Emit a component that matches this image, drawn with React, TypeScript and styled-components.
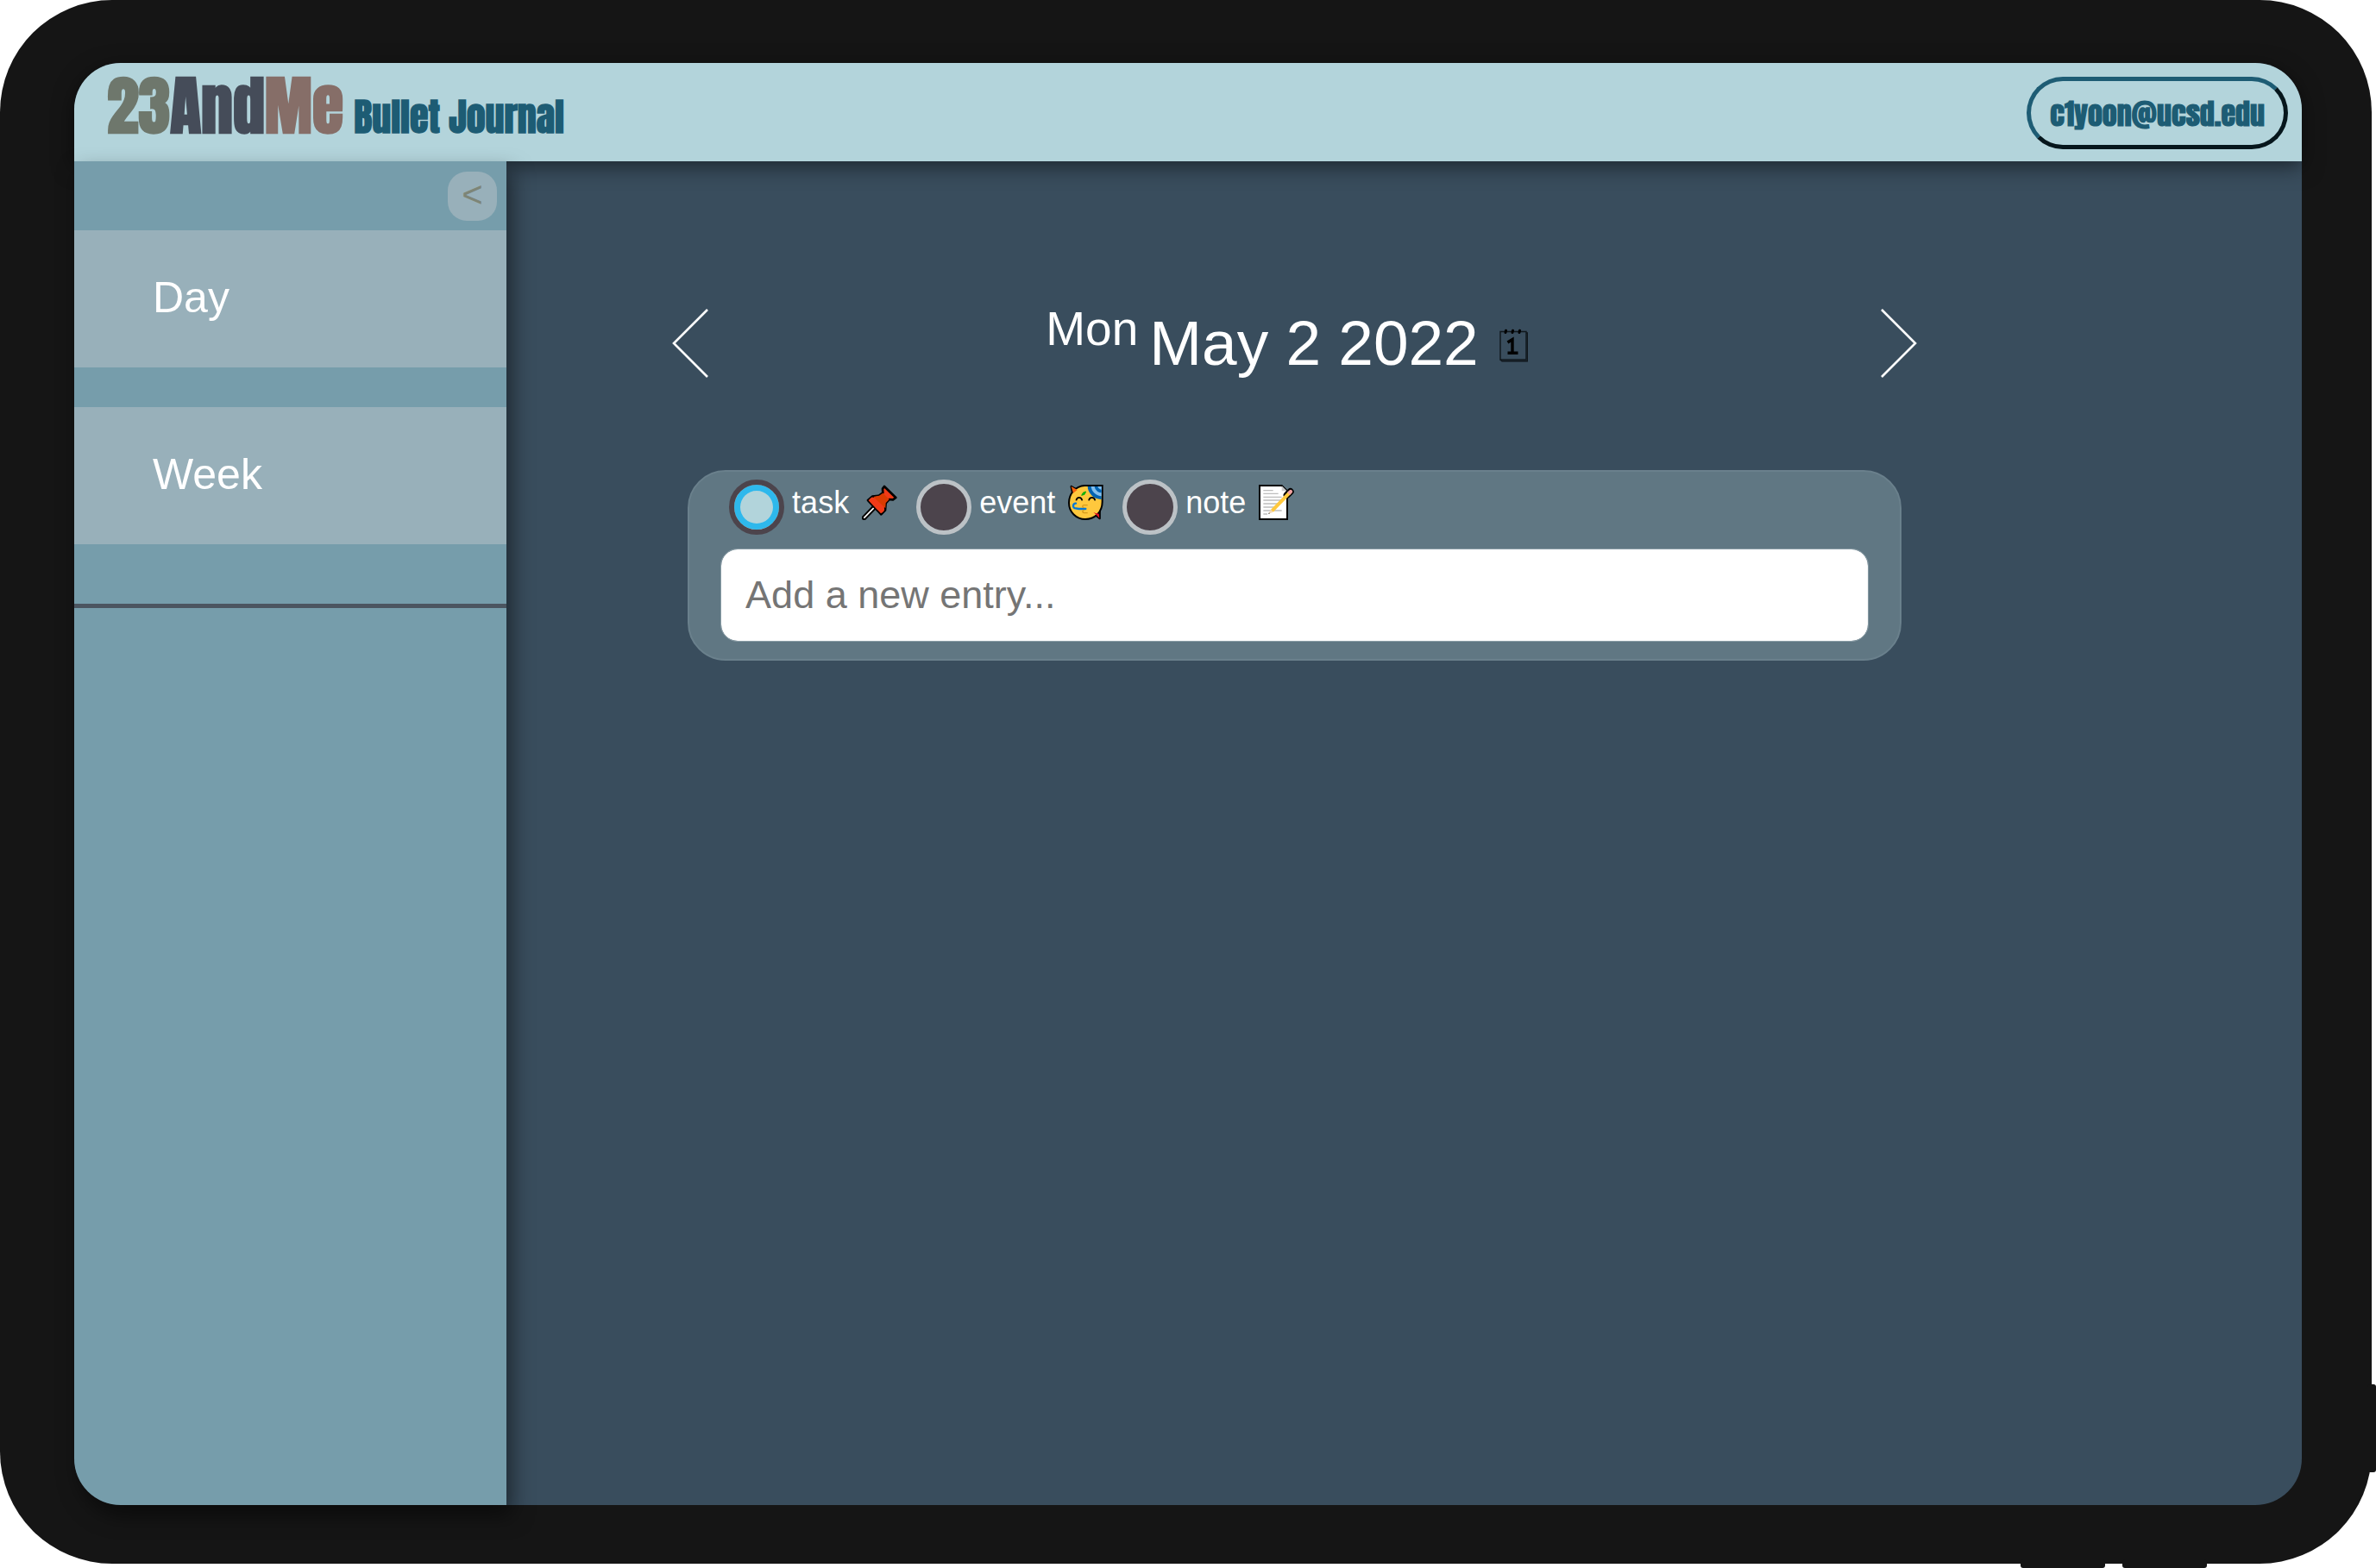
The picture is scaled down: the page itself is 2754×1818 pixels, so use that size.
import React, { useState } from "react";
import styled, { createGlobalStyle } from "styled-components";

const GlobalStyle = createGlobalStyle`
  *, *::before, *::after { box-sizing: border-box; }
  body {
    margin: 0;
    background: #ffffff;
    font-family: "Liberation Sans", Arial, sans-serif;
    color: #ffffff;
  }
  button, input { font: inherit; }
  svg { display: block; }
`;

const displayFont = `Impact, Anton, "Liberation Sans Narrow", "Roboto Condensed", "Liberation Sans", sans-serif`;

const Page = styled.div`
  display: flex;
  min-height: 100vh;
  padding: 0 5px 5px 0;
  overflow: hidden;
`;

const Device = styled.div`
  position: relative;
  display: flex;
  flex: 1;
  padding: 73px 81px 68px 86px;
  border-radius: 130px;
  background: #151515;
`;

const SideKey = styled.span`
  position: absolute;
  right: -5px;
  bottom: 106px;
  width: 10px;
  height: 102px;
  border-radius: 3px;
  background: #151515;
`;

const BottomKeys = styled.span`
  position: absolute;
  right: 191px;
  bottom: -5px;
  display: flex;
  gap: 20px;
`;

const BottomKey = styled.span`
  width: 98px;
  height: 10px;
  border-radius: 3px;
  background: #151515;
`;

const Screen = styled.div`
  display: grid;
  flex: 1;
  grid-template: auto 1fr / 501px 1fr;
  border-radius: 54px;
  background: #394d5d;
`;

const Header = styled.header`
  z-index: 1;
  grid-column: 1 / -1;
  display: flex;
  align-items: center;
  justify-content: space-between;
  height: 114px;
  padding: 2px 16px 0 38px;
  border-radius: 54px 54px 0 0;
  background: #b3d4db;
  box-shadow: 0 6px 24px rgba(0, 0, 0, 0.5);
`;

const Brand = styled.h1`
  margin: 0;
  padding-bottom: 4px;
  font-family: ${displayFont};
  font-size: 74px;
  line-height: 100px;
  font-weight: 700;
  white-space: nowrap;
`;

const BrandPart = styled.span<{ $tone: string }>`
  color: ${(p) => p.$tone};
`;

const BrandSub = styled.span`
  margin-left: 12px;
  color: #1d5c74;
  font-size: 44px;
`;

const Account = styled.button`
  height: 84px;
  padding: 0 22px;
  border: 5px solid;
  border-color: #1d5c74 #06161c #06161c #1d5c74;
  border-radius: 42px;
  background: transparent;
  color: #1d5c74;
  font-family: ${displayFont};
  font-size: 34px;
  font-weight: 700;
`;

const Sidebar = styled.aside`
  z-index: 2;
  border-bottom-left-radius: 54px;
  background: #769dab;
  box-shadow: 6px 12px 24px rgba(0, 0, 0, 0.5);
`;

const SidebarTop = styled.div`
  display: flex;
  justify-content: flex-end;
  padding: 12px 11px 11px;
`;

const Collapse = styled.button`
  width: 57px;
  height: 57px;
  padding: 0 0 4px;
  border: 0;
  border-radius: 22px;
  background: #98b0ba;
  color: #7d8577;
  font-size: 42px;
  line-height: 50px;
`;

const ViewList = styled.nav`
  display: grid;
  gap: 46px;
  padding-bottom: 69px;
  border-bottom: 5px solid #4b5560;
`;

const ViewLink = styled.a`
  padding: 49px 91px 52px;
  background: #98b0ba;
  color: #ffffff;
  font-size: 50px;
  line-height: 58px;
  text-decoration: none;
`;

const Main = styled.main`
  display: flex;
  flex-direction: column;
  align-items: center;
  gap: 106px;
  padding: 170px 254px 0 0;
`;

const DateBar = styled.div`
  display: flex;
  align-items: center;
  justify-content: space-between;
  width: 79%;
`;

const Plain = styled.button`
  display: block;
  padding: 0;
  border: 0;
  background: transparent;
  color: #000000;
`;

const PickerButton = styled(Plain)`
  padding-right: 18px;
`;

const DateGroup = styled.div`
  display: flex;
  align-items: baseline;
  gap: 24px;
`;

const DateTitle = styled.h2`
  margin: 0;
  font-size: 73px;
  line-height: 78px;
  font-weight: 400;
  white-space: nowrap;
`;

const Weekday = styled.sup`
  margin-right: 13px;
  font-size: 55px;
  line-height: 0;
  vertical-align: 23px;
`;

const EntryCard = styled.form`
  width: 77%;
  padding: 9px 36px 20px;
  border: 2px solid #6a808c;
  border-radius: 44px;
  background: #607783;
`;

const Kinds = styled.fieldset`
  display: flex;
  gap: 22px;
  margin: 0 0 16px;
  padding: 0 0 0 10px;
  border: 0;
`;

const Kind = styled.label`
  display: flex;
  align-items: flex-start;
  gap: 9px;
  font-size: 36px;
  line-height: 53px;
`;

const KindText = styled.span`
  display: flex;
  align-items: center;
  gap: 15px;
`;

const KindRadio = styled.input`
  appearance: none;
  width: 64px;
  height: 64px;
  margin: 0;
  border: 5px solid #bcc2c6;
  border-radius: 50%;
  background: #4c444c;

  &:checked {
    border: 6px solid #4c444c;
    background: #b2d4db;
    box-shadow: inset 0 0 0 7px #2eb8ec;
  }
`;

const EntryInput = styled.input`
  display: block;
  width: 100%;
  height: 108px;
  padding: 0 28px;
  border: 1px solid #8a9da6;
  border-radius: 20px;
  background: #ffffff;
  background-clip: padding-box;
  color: #222222;
  font-size: 45px;

  &::placeholder { color: #757575; opacity: 1; }
`;

const Chevron = ({ points }: { points: string }) => (
  <svg width="43" height="82" viewBox="0 0 43 82" fill="none" stroke="#ffffff" strokeWidth="2.6" aria-hidden="true">
    <polyline points={points} />
  </svg>
);

const CalendarIcon = () => (
  <svg width="33" height="42" viewBox="0 0 33 42" aria-hidden="true">
    <g fill="none" stroke="#10171c" strokeWidth="1.4">
      <path d="M1 3.5H31V36H1Z" />
      <path d="M31 5H32.3V37.8H3L1 36" />
    </g>
    <g stroke="#000000" strokeWidth="3" strokeLinecap="round">
      <path d="M7.5 2.2L7 4.5M15.5 2.2L15 4.5M23.5 2.2L23 4.5" />
    </g>
    <path d="M9.5 16L15 12.5V28M9.5 28.2H21.5" fill="none" stroke="#000000" strokeWidth="3.4" />
  </svg>
);

const PinIcon = () => (
  <svg width="41" height="41" viewBox="0 0 123 123" aria-hidden="true">
    <path d="M46 76L8 115" stroke="#000000" strokeWidth="17" strokeLinecap="square" />
    <path d="M48 74L7 116" stroke="#ffffff" strokeWidth="5" />
    <path
      d="M78 6L72 14L73 28L60 38L36 41L21 54L67 103L81 89L83 64L95 51L108 52L118 45Z"
      fill="#f03a17" stroke="#000000" strokeWidth="8" strokeLinejoin="round"
    />
    <path d="M73 29L60 38L40 42L82 82L83 64L95 51Z" fill="#da3b01" />
    <path d="M36 43Q25 50 23 55L66 100Q80 92 78 84Q58 58 36 43Z" fill="#f03a17" />
  </svg>
);

const PartyIcon = () => (
  <svg width="41" height="41" viewBox="0 0 123 123" aria-hidden="true">
    <g stroke="#000000" strokeWidth="7" strokeLinejoin="round">
      <path d="M11 6L16 30L33 19Z" fill="#f7630c" />
      <path d="M86 98L110 117V92Z" fill="#e81224" />
    </g>
    <path
      d="M119 3H58C25 5 3 32 3 63C3 95 28 120 60 120C94 120 119 94 119 60Z"
      fill="#ffc83d" stroke="#000000" strokeWidth="6"
    />
    <path d="M11 6L18 29L32 18Z" fill="#f7630c" />
    <path d="M68 6C69 30 90 51 116 51V6Z" fill="#0063b1" />
    <path d="M80 6C82 24 96 38 116 40V6Z" fill="#83beec" />
    <path d="M92 6C94 18 103 27 116 28V6Z" fill="#0063b1" />
    <path d="M103 6C104 11 109 16 116 17V6Z" fill="#83beec" />
    <path d="M47 37L53 27L62 24L57 34Z" fill="#16c60c" stroke="#10a50a" strokeWidth="3" />
    <path d="M28 55C31 41 46 41 49 55M72 55C75 41 91 41 94 55" fill="none" stroke="#000000" strokeWidth="5" />
    <path d="M27 65C16 64 14 82 27 82L37 84H61" fill="none" stroke="#0078d7" strokeWidth="7" strokeLinecap="round" />
    <path d="M68 71H55C48 72 49 80 56 80M56 88C48 90 49 97 56 98H68" fill="none" stroke="#d59a1c" strokeWidth="4" />
    <path d="M88 95L109 116L107 101L96 99Z" fill="#e81224" />
  </svg>
);

const MemoIcon = () => (
  <svg width="41" height="41" viewBox="0 0 123 123" aria-hidden="true">
    <path d="M3 3H80L99 22V120H3Z" fill="#ffffff" stroke="#000000" strokeWidth="6" />
    <path d="M80 4V22H98Z" fill="#cccccc" />
    <path
      d="M16 20H50M16 31H68M16 43H80M16 54H80M16 66H68M16 78H56M16 90H80M16 102H30"
      stroke="#bdbdbd" strokeWidth="4"
    />
    <path d="M110 24L98 36" stroke="#000000" strokeWidth="24" strokeLinecap="round" />
    <path d="M108 27L46 91" stroke="#ffc83d" strokeWidth="12" />
    <path d="M42 87L33 102L50 95Z" fill="#f3d9b8" />
    <path d="M33 102L36 97L39 100Z" fill="#404040" />
    <path d="M104 31L107 28" stroke="#cccccc" strokeWidth="13" />
    <path d="M108 27L111 24" stroke="#f4a1a1" strokeWidth="13" strokeLinecap="round" />
  </svg>
);

const kinds = [
  { id: "task", icon: <PinIcon /> },
  { id: "event", icon: <PartyIcon /> },
  { id: "note", icon: <MemoIcon /> },
];

export default function App() {
  const [kind, setKind] = useState("task");

  return (
    <>
      <GlobalStyle />
      <Page>
        <Device>
          <SideKey />
          <BottomKeys>
            <BottomKey />
            <BottomKey />
          </BottomKeys>
          <Screen>
            <Header>
              <Brand>
                <BrandPart $tone="#6e776c">23</BrandPart>
                <BrandPart $tone="#454c59">And</BrandPart>
                <BrandPart $tone="#866e68">Me</BrandPart>
                <BrandSub>Bullet Journal</BrandSub>
              </Brand>
              <Account type="button">c1yoon@ucsd.edu</Account>
            </Header>
            <Sidebar>
              <SidebarTop>
                <Collapse type="button" aria-label="Collapse sidebar">&lt;</Collapse>
              </SidebarTop>
              <ViewList>
                <ViewLink href="#day">Day</ViewLink>
                <ViewLink href="#week">Week</ViewLink>
              </ViewList>
            </Sidebar>
            <Main>
              <DateBar>
                <Plain type="button" aria-label="Previous day">
                  <Chevron points="41,2 2,41 41,80" />
                </Plain>
                <DateGroup>
                  <DateTitle>
                    <Weekday>Mon</Weekday>May 2 2022
                  </DateTitle>
                  <PickerButton type="button" aria-label="Pick a date">
                    <CalendarIcon />
                  </PickerButton>
                </DateGroup>
                <Plain type="button" aria-label="Next day">
                  <Chevron points="2,2 41,41 2,80" />
                </Plain>
              </DateBar>
              <EntryCard onSubmit={(e) => e.preventDefault()}>
                <Kinds>
                  {kinds.map((k) => (
                    <Kind key={k.id}>
                      <KindRadio
                        type="radio"
                        name="kind"
                        value={k.id}
                        checked={kind === k.id}
                        onChange={() => setKind(k.id)}
                      />
                      <KindText>
                        {k.id}
                        {k.icon}
                      </KindText>
                    </Kind>
                  ))}
                </Kinds>
                <EntryInput type="text" aria-label="New entry" placeholder="Add a new entry..." />
              </EntryCard>
            </Main>
          </Screen>
        </Device>
      </Page>
    </>
  );
}
